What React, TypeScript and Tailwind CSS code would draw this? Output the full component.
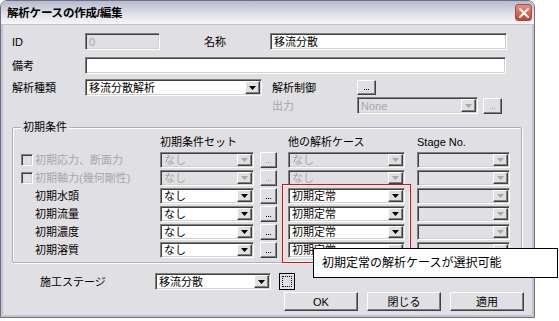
import type { ReactNode } from 'react';

const sunken =
  'border border-t-[#808080] border-l-[#808080] border-b-white border-r-white shadow-[inset_1px_1px_0_#404040,inset_-1px_-1px_0_#d4d0c8]';
const raised =
  'border border-t-white border-l-white border-b-[#404040] border-r-[#404040] shadow-[inset_-1px_-1px_0_#808080] bg-[#e0dfe3]';

function Label({ w, children, disabled }: { w: string; children?: ReactNode; disabled?: boolean }) {
  return (
    <span className={`${w} shrink-0 whitespace-nowrap ${disabled ? 'text-[#a7a6aa]' : 'text-black'}`}>
      {children}
    </span>
  );
}

function TextBox({ w, value, disabled }: { w: string; value?: string; disabled?: boolean }) {
  return (
    <div
      className={`${sunken} ${w} h-[17px] shrink-0 flex items-center pl-[3px] ${
        disabled ? 'bg-[#e0dfe3] text-[#a7a6aa]' : 'bg-white text-black'
      }`}
    >
      {value}
    </div>
  );
}

function Combo({ w, h = 'h-[16px]', value, disabled }: { w: string; h?: string; value?: string; disabled?: boolean }) {
  return (
    <div
      className={`${sunken} ${w} ${h} shrink-0 flex items-stretch ${
        disabled ? 'bg-[#e0dfe3] text-[#a7a6aa]' : 'bg-white text-black'
      }`}
    >
      <span className="flex-1 flex items-center pl-[3px] overflow-hidden whitespace-nowrap">{value}</span>
      <span className={`${raised} w-[15px] m-[1px] flex items-center justify-center`}>
        <svg width="7" height="4" viewBox="0 0 7 4">
          <path d="M0 0h7L3.5 4z" fill={disabled ? '#a7a6aa' : '#000'} />
        </svg>
      </span>
    </div>
  );
}

function Dots({ w = 'w-[17px]', h = 'h-[16px]', disabled }: { w?: string; h?: string; disabled?: boolean }) {
  const dot = disabled ? 'w-[1px] h-[1px] bg-[#a7a6aa]' : 'w-[1px] h-[1px] bg-black';
  return (
    <div className={`${raised} ${w} ${h} shrink-0 flex items-end justify-center pb-[4px] gap-[1px]`}>
      <span className={dot} />
      <span className={dot} />
      <span className={dot} />
    </div>
  );
}

function Button({ children }: { children: ReactNode }) {
  return (
    <div className={`${raised} w-[74px] h-[19px] flex items-center justify-center text-black`}>{children}</div>
  );
}

function CheckBox() {
  return <span className={`${sunken} w-[12px] h-[12px] bg-[#e0dfe3] shrink-0`} />;
}

interface CondRow {
  label: string;
  check?: boolean;
  set: string;
  other: string;
  enabled: boolean;
}

const rows: CondRow[] = [
  { label: '初期応力、断面力', check: true, set: 'なし', other: 'なし', enabled: false },
  { label: '初期軸力(幾何剛性)', check: true, set: 'なし', other: 'なし', enabled: false },
  { label: '初期水頭', set: 'なし', other: '初期定常', enabled: true },
  { label: '初期流量', set: 'なし', other: '初期定常', enabled: true },
  { label: '初期濃度', set: 'なし', other: '初期定常', enabled: true },
  { label: '初期溶質', set: 'なし', other: '初期定常', enabled: true },
];

export default function App() {
  return (
    <div className="relative w-[559px] h-[321px] bg-white text-[11px] leading-[14px] font-['Liberation_Sans','Noto_Sans_CJK_JP',sans-serif]">
      <div className="w-[535px] h-[318px] rounded-t-[7px] border border-[#6e7089] overflow-hidden flex flex-col">
        {/* title bar */}
        <div className="h-[24px] shrink-0 flex items-center justify-between pl-[6px] pr-[2px] bg-gradient-to-b from-[#b7bacb] via-[#dcdde6] to-[#f7f7fa] border-b border-[#c2c4d3]">
          <span className="font-bold text-[11.5px] text-black tracking-[-0.2px]">解析ケースの作成/編集</span>
          <span className="w-[17px] h-[17px] rounded-[3px] border border-[#a84a3d] bg-gradient-to-b from-[#e8907f] to-[#c9402e] flex items-center justify-center">
            <svg width="10" height="10" viewBox="0 0 10 10">
              <path d="M1 1L9 9M9 1L1 9" stroke="#fff" strokeWidth="2" strokeLinecap="square" />
            </svg>
          </span>
        </div>

        {/* body */}
        <div className="flex-1 bg-[#e0dfe3] border-x-2 border-b-2 border-[#c2c4d3] pl-[9px] flex flex-col">
          <div className="mt-[8px] h-[17px] flex items-center">
            <Label w="w-[73px]">ID</Label>
            <TextBox w="w-[75px]" value="0" disabled />
            <Label w="w-[66px] ml-[44px]">名称</Label>
            <TextBox w="w-[237px]" value="移流分散" />
          </div>

          <div className="mt-[7px] h-[17px] flex items-center">
            <Label w="w-[73px]">備考</Label>
            <TextBox w="w-[421px]" />
          </div>

          <div className="mt-[5px] h-[17px] flex items-center">
            <Label w="w-[73px]">解析種類</Label>
            <Combo w="w-[177px]" h="h-[17px]" value="移流分散解析" />
            <Label w="w-[85px] ml-[10px]">解析制御</Label>
            <Dots w="w-[19px]" h="h-[15px]" />
          </div>

          <div className="mt-[1px] h-[17px] flex items-center">
            <span className="w-[260px] shrink-0" />
            <Label w="w-[85px]" disabled>
              出力
            </Label>
            <Combo w="w-[121px]" h="h-[17px]" value="None" disabled />
            <span className="ml-[5px]">
              <Dots w="w-[19px]" h="h-[16px]" disabled />
            </span>
          </div>

          {/* 初期条件 group */}
          <div className="relative mt-[13px] w-[510px] border border-[#aeaeb6] shadow-[1px_1px_0_#fff,inset_1px_1px_0_#fff] rounded-[2px] pb-[4px]">
            <span className="absolute -top-[8px] left-[8px] px-[2px] bg-[#e0dfe3] text-black">初期条件</span>

            <div className="mt-[7px] h-[14px] flex items-center text-black">
              <span className="w-[147px] shrink-0" />
              <span className="w-[128px] shrink-0">初期条件セット</span>
              <span className="w-[129px] shrink-0">他の解析ケース</span>
              <span>Stage No.</span>
            </div>

            <div className="mt-[3px] flex flex-col gap-[2px]">
              {rows.map((r) => (
                <div key={r.label} className="h-[16px] flex items-center">
                  <div className={`w-[147px] shrink-0 flex items-center ${r.check ? 'pl-[8px] gap-[2px]' : 'pl-[22px]'}`}>
                    {r.check && <CheckBox />}
                    <Label w="w-auto" disabled={!r.enabled}>
                      {r.label}
                    </Label>
                  </div>
                  <Combo w="w-[94px]" value={r.set} disabled={!r.enabled} />
                  <span className="ml-[6px]">
                    <Dots disabled={!r.enabled} />
                  </span>
                  <span className="ml-[11px]">
                    <Combo w="w-[117px]" value={r.other} disabled={!r.enabled} />
                  </span>
                  <span className="ml-[12px]">
                    <Combo w="w-[93px]" disabled />
                  </span>
                </div>
              ))}
            </div>
          </div>

          <div className="mt-[10px] h-[17px] flex items-center">
            <Label w="w-[115px] ml-[28px]">施工ステージ</Label>
            <Combo w="w-[116px]" h="h-[17px]" value="移流分散" />
            <div className="ml-[8px] w-[16px] h-[17px] border border-black bg-[#e0dfe3] p-[2px]">
              <div className="w-full h-full border border-dotted border-black" />
            </div>
          </div>

          <div className="mt-[2px] ml-[272px] flex gap-[9px]">
            <Button>OK</Button>
            <Button>閉じる</Button>
            <Button>適用</Button>
          </div>
        </div>
      </div>

      {/* annotation overlay: highlight frame + callout */}
      <div className="absolute left-[283px] top-[185px] w-[127px] h-[77px] shadow-[0_0_0_1px_#ff0000,inset_0_0_0_1px_#ffffff]" />
      <div className="absolute left-[313px] top-[248px] w-[245px] h-[30px] bg-white border border-black pl-[8px] flex items-center text-[12px] text-black">
        初期定常の解析ケースが選択可能
      </div>
    </div>
  );
}
